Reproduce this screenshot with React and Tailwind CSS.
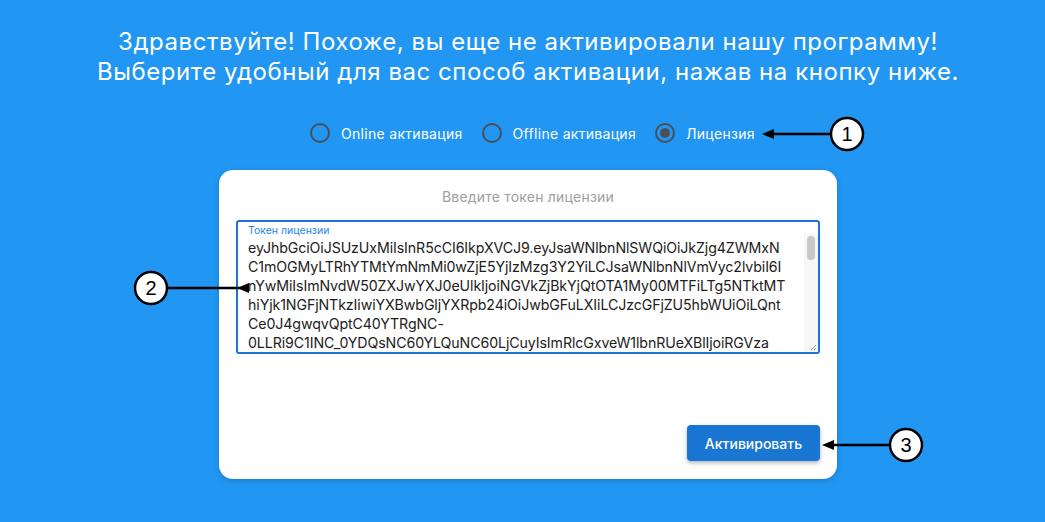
import { useState } from "react";

const tokenLines = [
  "eyJhbGciOiJSUzUxMiIsInR5cCI6IkpXVCJ9.eyJsaWNlbnNlSWQiOiJkZjg4ZWMxN",
  "C1mOGMyLTRhYTMtYmNmMi0wZjE5YjIzMzg3Y2YiLCJsaWNlbnNlVmVyc2lvbiI6I",
  "nYwMiIsImNvdW50ZXJwYXJ0eUlkIjoiNGVkZjBkYjQtOTA1My00MTFiLTg5NTktMT",
  "hiYjk1NGFjNTkzIiwiYXBwbGljYXRpb24iOiJwbGFuLXIiLCJzcGFjZU5hbWUiOiLQnt",
  "Ce0J4gwqvQptC40YTRgNC-",
  "0LLRi9C1INC_0YDQsNC60YLQuNC60LjCuyIsImRlcGxveW1lbnRUeXBlIjoiRGVza",
];

const modes = [
  { id: "online", label: "Online активация" },
  { id: "offline", label: "Offline активация" },
  { id: "license", label: "Лицензия" },
];

//numbered callout with arrow
function Callout({ cx, cy, n, tip }) {
  return (
    <g>
      <line x1={cx - 17} y1={cy} x2={tip + 9} y2={cy} stroke="#000" strokeWidth="2.5" />
      <polygon points={`${tip},${cy} ${tip + 12},${cy - 5} ${tip + 12},${cy + 5}`} fill="#000" />
      <circle cx={cx} cy={cy} r="16" fill="#fff" stroke="#000" strokeWidth="2.5" />
      <text
        x={cx}
        y={cy + 7}
        textAnchor="middle"
        fontSize="20"
        fontFamily="'Liberation Sans', Arial, sans-serif"
        fill="#000"
      >
        {n}
      </text>
    </g>
  );
}

function App() {
  const [mode, setMode] = useState("license");

  return (
    <div className="relative h-[522px] w-full overflow-hidden bg-[#2196f3] font-['Inter',sans-serif] text-white">
      {/* Heading */}
      <div className="pl-[11px] pt-[27px] text-center text-[24px] leading-[30px] tracking-[0.55px]">
        <p>Здравствуйте! Похоже, вы еще не активировали нашу программу!</p>
        <p>Выберите удобный для вас способ активации, нажав на кнопку ниже.</p>
      </div>

      <div className="ml-[219px] w-[618px]">
        {/* Radios */}
        <div className="mt-[36px] flex h-[20px] items-center pl-[91px]">
          {modes.map((m) => (
            <label
              key={m.id}
              onClick={() => setMode(m.id)}
              className="mr-[19px] flex cursor-pointer items-center gap-[11px] text-[14px] tracking-[0.3px]"
            >
              <span className="flex h-[20px] w-[20px] items-center justify-center rounded-full border-2 border-[#4a4f57]">
                {mode === m.id && <span className="h-[10px] w-[10px] rounded-full bg-[#4a4f57]" />}
              </span>
              {m.label}
            </label>
          ))}
        </div>

        {/* Card */}
        <div className="mt-[27px] rounded-[14px] bg-white px-[17px] pb-[18px] pt-[18px] shadow-[0_2px_6px_rgba(0,0,0,0.15)]">
          <p className="text-center text-[14px] leading-[18px] tracking-[0.2px] text-[#9e9e9e]">Введите токен лицензии</p>

          <div className="relative mt-[14px] h-[134px] overflow-hidden rounded-[3px] border-2 border-[#1976d2] pl-[10px] pr-[16px] pt-[2px]">
            <p className="text-[10.5px] leading-[13px] text-[#1e88e5]">Токен лицензии</p>
            <div className="pt-[1px] text-[14.2px] leading-[19px] tracking-[-0.1px] text-[#212121]">
              {tokenLines.map((l, i) => (
                <div key={i} className="whitespace-nowrap">
                  {l}
                </div>
              ))}
            </div>
            {/* scrollbar */}
            <div className="absolute bottom-0 right-0 top-[11px] w-[14px] bg-[#f6f6f6]">
              <div className="mx-auto mt-[3px] h-[24px] w-[8px] rounded-full bg-[#c8c8c8]" />
            </div>
            <svg className="absolute bottom-[1px] right-[1px]" width="8" height="8" viewBox="0 0 8 8">
              <path d="M7 2 L2 7 M7 5 L5 7" stroke="#999" strokeWidth="1" />
            </svg>
          </div>

          <div className="mt-[71px] flex justify-end">
            <button className="h-[36px] w-[133px] rounded-[4px] bg-[#1976d2] text-[14px] font-medium text-white shadow-[0_2px_4px_rgba(0,0,0,0.3)]">
              Активировать
            </button>
          </div>
        </div>
      </div>

      {/* Annotations */}
      <svg className="pointer-events-none absolute left-0 top-0" width="1045" height="522">
        <Callout cx={847} cy={134} n="1" tip={762} />
        <Callout cx={151} cy={288} n="2" tip={237} />
        <Callout cx={906} cy={445} n="3" tip={822} />
      </svg>
    </div>
  );
}

export default App;
